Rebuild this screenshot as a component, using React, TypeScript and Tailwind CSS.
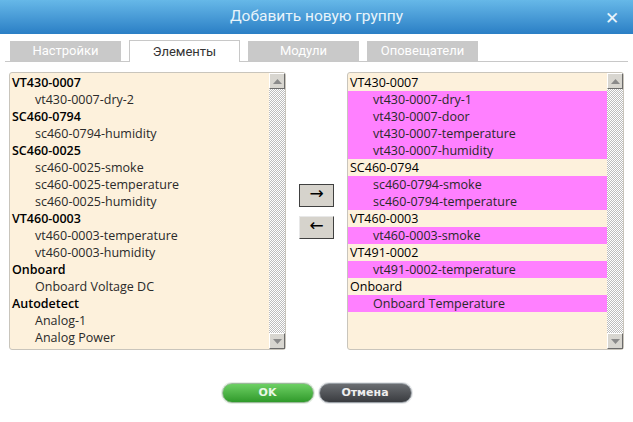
import type { ReactNode } from "react";

type Row = { text: string; header?: boolean; selected?: boolean };

const leftRows: Row[] = [
  { text: "VT430-0007", header: true },
  { text: "vt430-0007-dry-2" },
  { text: "SC460-0794", header: true },
  { text: "sc460-0794-humidity" },
  { text: "SC460-0025", header: true },
  { text: "sc460-0025-smoke" },
  { text: "sc460-0025-temperature" },
  { text: "sc460-0025-humidity" },
  { text: "VT460-0003", header: true },
  { text: "vt460-0003-temperature" },
  { text: "vt460-0003-humidity" },
  { text: "Onboard", header: true },
  { text: "Onboard Voltage DC" },
  { text: "Autodetect", header: true },
  { text: "Analog-1" },
  { text: "Analog Power" },
];

const rightRows: Row[] = [
  { text: "VT430-0007", header: true },
  { text: "vt430-0007-dry-1", selected: true },
  { text: "vt430-0007-door", selected: true },
  { text: "vt430-0007-temperature", selected: true },
  { text: "vt430-0007-humidity", selected: true },
  { text: "SC460-0794", header: true },
  { text: "sc460-0794-smoke", selected: true },
  { text: "sc460-0794-temperature", selected: true },
  { text: "VT460-0003", header: true },
  { text: "vt460-0003-smoke", selected: true },
  { text: "VT491-0002", header: true },
  { text: "vt491-0002-temperature", selected: true },
  { text: "Onboard", header: true },
  { text: "Onboard Temperature", selected: true },
];

function Arrow({ up }: { up?: boolean }) {
  return (
    <div className="flex h-[16px] w-[16px] items-center justify-center border border-t-white border-l-white border-r-[#6b6b6b] border-b-[#6b6b6b] bg-[#d8d6d0]">
      <svg width="9" height="5" viewBox="0 0 9 5">
        {up ? <path d="M0 5 L4.5 0 L9 5 Z" fill="#8a8a8a" /> : <path d="M0 0 L4.5 5 L9 0 Z" fill="#8a8a8a" />}
      </svg>
    </div>
  );
}

function ListBox({ rows, boldHeaders }: { rows: Row[]; boldHeaders?: boolean }) {
  return (
    <div className="flex h-[278px] w-[277px] rounded-[3px] border border-[#c9c5bc] bg-[#fdf1dc]">
      <div className="flex-1 pt-[1px]">
        {rows.map((r, i) => (
          <div
            key={i}
            className={`h-[17px] whitespace-nowrap text-[12.5px] leading-[17px] ${
              r.header
                ? `pl-[2px] text-black ${boldHeaders ? "font-semibold" : "font-normal"}`
                : "pl-[25px] text-[#2a2a2a]"
            } ${r.selected ? "bg-[#ff80ff]" : ""}`}
          >
            {r.text}
          </div>
        ))}
      </div>
      <div className="flex w-[16px] flex-col justify-between bg-[repeating-conic-gradient(#bdbdbd_0%_25%,#ffffff_0%_50%)] bg-[length:2px_2px]">
        <Arrow up />
        <Arrow />
      </div>
    </div>
  );
}

function Tab({ children, active }: { children: ReactNode; active?: boolean }) {
  return active ? (
    <div className="-mb-px flex h-[22px] w-[111px] items-center justify-center border border-b-0 border-[#c8c8c8] bg-white text-[13px] text-[#333]">
      {children}
    </div>
  ) : (
    <div className="flex h-[20px] w-[111px] items-center justify-center bg-[#c9c9c9] text-[13px] text-white">
      {children}
    </div>
  );
}

function MoveButton({ children, dark }: { children: ReactNode; dark?: boolean }) {
  return (
    <div
      className={`flex h-[23px] w-[35px] items-center justify-center border bg-[#d6d3cc] pb-[2px] font-['DejaVu_Sans',sans-serif] text-[17px] text-black ${
        dark ? "border-[#404040]" : "border-t-[#e8e8e8] border-l-[#e8e8e8] border-r-[#404040] border-b-[#404040]"
      }`}
    >
      {children}
    </div>
  );
}

export default function App() {
  return (
    <div className="h-[422px] w-[633px] overflow-hidden bg-white font-['Open_Sans',sans-serif]">
      <div className="relative flex h-[34px] items-center justify-center bg-gradient-to-b from-[#66b8e8] to-[#2a7fc5] font-['Roboto',sans-serif] text-[15.5px] text-[#e8f4fb]">
        Добавить новую группу
        <span className="absolute right-[14px] top-[6px] text-[17px] text-[#e8f4fb]">✕</span>
      </div>

      <div className="mx-[5px] mt-[7px] flex h-[21px] items-end gap-2 border-b border-[#c8c8c8] pl-[5px] font-['Roboto',sans-serif]">
        <Tab>Настройки</Tab>
        <Tab active>Элементы</Tab>
        <Tab>Модули</Tab>
        <Tab>Оповещатели</Tab>
      </div>

      <div className="mt-[10px] flex pl-[9px]">
        <ListBox rows={leftRows} boldHeaders />
        <div className="flex w-[61px] flex-col items-center justify-center gap-[9px]">
          <MoveButton dark>→</MoveButton>
          <MoveButton>←</MoveButton>
        </div>
        <ListBox rows={rightRows} />
      </div>

      <div className="mt-[33px] flex justify-center gap-[5px] font-['DejaVu_Sans',sans-serif] text-[11px] font-bold">
        <div className="flex h-[20px] w-[92px] items-center justify-center rounded-full border border-[#9bb89a] bg-gradient-to-b from-[#6cd063] to-[#2f9a2a] text-[#e9f7e6] shadow-[0_0_0_1px_#e5efe4]">
          OK
        </div>
        <div className="flex h-[20px] w-[93px] items-center justify-center rounded-full border border-[#9aa0a6] bg-gradient-to-b from-[#6b6e72] to-[#3a3c40] text-[#eeeeee] shadow-[0_0_0_1px_#e6e8ea]">
          Отмена
        </div>
      </div>
    </div>
  );
}
